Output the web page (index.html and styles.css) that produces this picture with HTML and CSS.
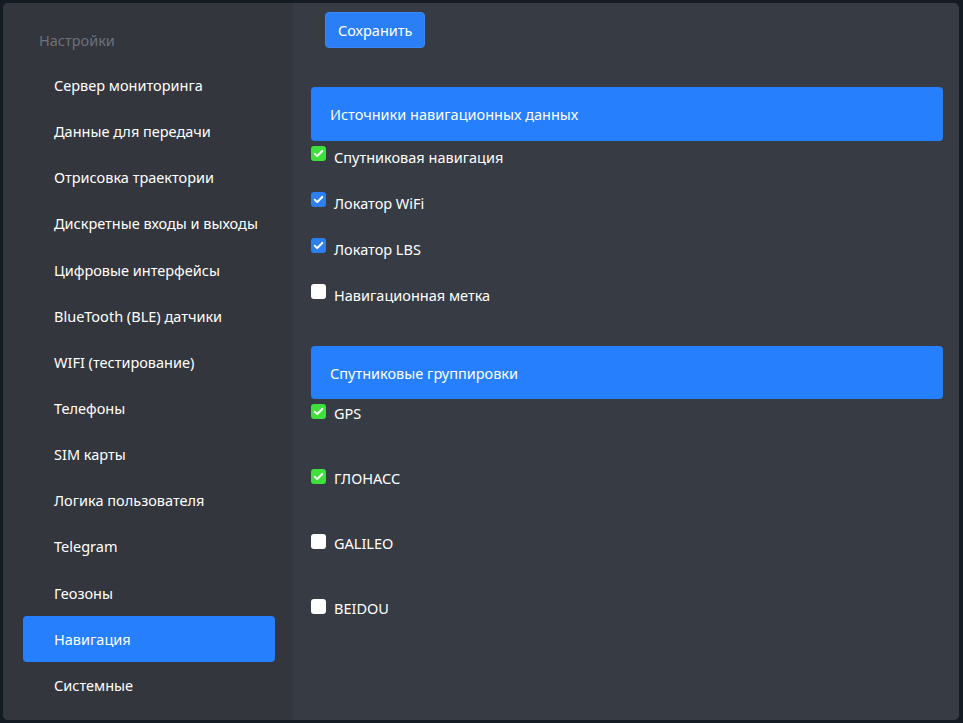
FILE: index.html
```html
<!DOCTYPE html>
<html lang="ru">
<head>
<meta charset="utf-8">
<title>Настройки</title>
<link rel="stylesheet" href="styles.css">
</head>
<body>
<div class="panel">
  <aside class="sidebar">
    <div class="side-title">Настройки</div>
    <nav class="menu">
      <div class="menu-item">Сервер мониторинга</div>
      <div class="menu-item">Данные для передачи</div>
      <div class="menu-item">Отрисовка траектории</div>
      <div class="menu-item">Дискретные входы и выходы</div>
      <div class="menu-item">Цифровые интерфейсы</div>
      <div class="menu-item">BlueTooth (BLE) датчики</div>
      <div class="menu-item">WIFI (тестирование)</div>
      <div class="menu-item">Телефоны</div>
      <div class="menu-item">SIM карты</div>
      <div class="menu-item">Логика пользователя</div>
      <div class="menu-item">Telegram</div>
      <div class="menu-item">Геозоны</div>
      <div class="menu-item active">Навигация</div>
      <div class="menu-item">Системные</div>
    </nav>
  </aside>
  <main class="content">
    <div class="toolbar">
      <button class="btn-save">Сохранить</button>
    </div>

    <section class="group">
      <div class="group-header">Источники навигационных данных</div>
      <label class="row"><span class="cb green"><svg viewBox="0 0 16 16"><path d="M4 8.3l2.6 2.5L12 5.3"/></svg></span><span class="lbl">Спутниковая навигация</span></label>
      <label class="row"><span class="cb blue"><svg viewBox="0 0 16 16"><path d="M4 8.3l2.6 2.5L12 5.3"/></svg></span><span class="lbl">Локатор WiFi</span></label>
      <label class="row"><span class="cb blue"><svg viewBox="0 0 16 16"><path d="M4 8.3l2.6 2.5L12 5.3"/></svg></span><span class="lbl">Локатор LBS</span></label>
      <label class="row"><span class="cb"></span><span class="lbl">Навигационная метка</span></label>
    </section>

    <section class="group group-2">
      <div class="group-header">Спутниковые группировки</div>
      <label class="row tall"><span class="cb green"><svg viewBox="0 0 16 16"><path d="M4 8.3l2.6 2.5L12 5.3"/></svg></span><span class="lbl">GPS</span></label>
      <label class="row tall"><span class="cb green"><svg viewBox="0 0 16 16"><path d="M4 8.3l2.6 2.5L12 5.3"/></svg></span><span class="lbl">ГЛОНАСС</span></label>
      <label class="row tall"><span class="cb"></span><span class="lbl">GALILEO</span></label>
      <label class="row tall"><span class="cb"></span><span class="lbl">BEIDOU</span></label>
    </section>
  </main>
</div>
</body>
</html>
```

FILE: styles.css
```css
* { box-sizing: border-box; }
html, body { height: 100%; }
body {
  margin: 0;
  padding: 3px 4px 3px 3px;
  background: #151b22;
  font-family: "Noto Sans", "Open Sans", sans-serif;
  font-size: 14.5px;
  color: #ffffff;
}
.panel {
  display: flex;
  height: 717px;
  border-radius: 5px;
  overflow: hidden;
  background: #373b43;
}
.sidebar {
  width: 290px;
  flex: none;
  background: #33363d;
  padding: 0 18px 0 20px;
}
.side-title {
  height: 59px;
  padding: 26px 0 0 16px;
  line-height: 22px;
  color: #6b717a;
  font-size: 14.5px;
}
.menu { display: flex; flex-direction: column; }
.menu-item {
  height: 46.15px;
  display: flex;
  align-items: center;
  padding-left: 31px;
  border-radius: 4px;
  white-space: nowrap;
}
.menu-item.active { background: #2680fe; }
.content {
  flex: 1;
  padding: 9px 16px 0 18px;
}
.toolbar { padding-left: 14px; height: 75px; }
.btn-save {
  height: 36px;
  padding: 0 12px;
  border: 1px solid #3b86f0;
  border-radius: 4px;
  background: #2a7ff7;
  color: #fff;
  font-family: inherit;
  font-size: 14.5px;
  line-height: 34px;
}
.group-header {
  height: 54px;
  display: flex;
  align-items: center;
  padding-left: 19px;
  background: #2680fe;
  border-radius: 4px;
  font-size: 14.5px;
}
.group-2 { margin-top: 21px; }
.group-2 .group-header { height: 53px; }
.row {
  display: flex;
  align-items: flex-start;
  height: 46px;
  padding-top: 5px;
}
.row.tall { height: 65px; padding-top: 5px; }
.cb {
  width: 15px;
  height: 15px;
  margin-right: 8px;
  flex: none;
  border-radius: 3px;
  background: #ffffff;
  display: flex;
}
.cb svg { width: 15px; height: 15px; }
.cb path { fill: none; stroke: #fff; stroke-width: 2.2; stroke-linecap: round; stroke-linejoin: round; }
.cb.green { background: #3ee03c; }
.cb.blue { background: #2b7ff0; }
.lbl { line-height: 22px; margin-top: 0; }
.row.tall .lbl { margin-top: -2px; }
```
